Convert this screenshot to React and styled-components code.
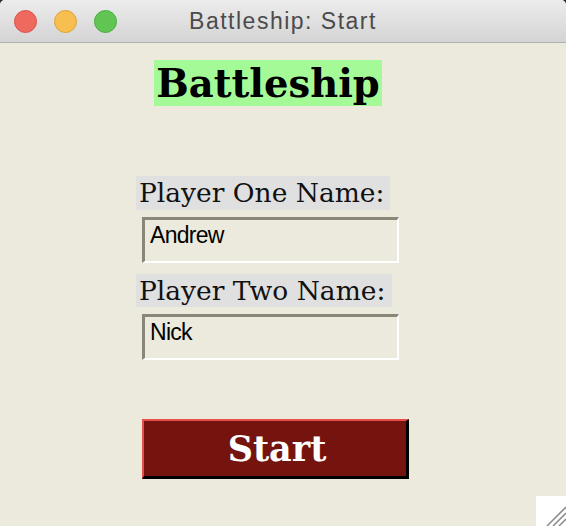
import React from 'react';
import styled, { createGlobalStyle } from 'styled-components';

const GlobalStyle = createGlobalStyle`
  html, body {
    margin: 0;
    padding: 0;
    background: #2a2a2a;
  }
  * {
    box-sizing: border-box;
  }
`;

function App() {
  return (
    <Window>
      <GlobalStyle />
      <TitleBar>
        <Lights>
          <Light color="#ee6a5f" edge="#d9534b" />
          <Light color="#f6bf4f" edge="#dea23a" />
          <Light color="#61c554" edge="#4aad40" />
        </Lights>
        <Title>Battleship: Start</Title>
      </TitleBar>

      <Content>
        <Heading>Battleship</Heading>

        <Label $width={254} $top={70} $height={34}>Player One Name:</Label>
        <Entry defaultValue="Andrew" $top={7} />

        <Label $width={256} $top={11} $height={33}>Player Two Name:</Label>
        <Entry defaultValue="Nick" $top={7} />

        <StartButton>Start</StartButton>
      </Content>

      <Grip>
        <svg width="30" height="30" viewBox="0 0 30 30">
          <line x1="30" y1="11" x2="11" y2="30" stroke="#8f8f8f" strokeWidth="1.6" />
          <line x1="30" y1="17" x2="17" y2="30" stroke="#8f8f8f" strokeWidth="1.6" />
          <line x1="30" y1="23" x2="23" y2="30" stroke="#8f8f8f" strokeWidth="1.6" />
        </svg>
      </Grip>
    </Window>
  );
}

export default App;

const Window = styled.div`
  position: relative;
  width: 566px;
  height: 526px;
  background: #ece9dd;
  border-radius: 5px 5px 0 0;
  overflow: hidden;
`;

const TitleBar = styled.div`
  display: grid;
  grid-template-columns: 1fr auto 1fr;
  align-items: center;
  height: 43px;
  background: linear-gradient(#ececec, #d4d4d4);
  border-bottom: 1px solid #b1b1b1;
`;

const Lights = styled.div`
  display: flex;
  gap: 17px;
  padding-left: 14px;
  padding-top: 1px;
`;

const Light = styled.span`
  width: 23px;
  height: 23px;
  border-radius: 50%;
  background: ${props => props.color};
  border: 1px solid ${props => props.edge};
`;

const Title = styled.div`
  font-family: "Liberation Sans", Arial, sans-serif;
  font-size: 23px;
  letter-spacing: 1.5px;
  color: #4b4b4b;
  padding-top: 1px;
`;

const Content = styled.div`
  display: flex;
  flex-direction: column;
  align-items: flex-start;
  padding-left: 136px;
`;

const Heading = styled.div`
  margin-top: 17px;
  margin-left: 18px;
  width: 228px;
  height: 46px;
  background: #a5fa98;
  display: flex;
  align-items: center;
  justify-content: center;
  font-family: "DejaVu Serif", serif;
  font-weight: bold;
  font-size: 38.5px;
  color: #000;
  white-space: nowrap;
`;

const Label = styled.div`
  margin-top: ${props => props.$top}px;
  width: ${props => props.$width}px;
  height: ${props => props.$height}px;
  line-height: ${props => props.$height}px;
  background: #e0e0e0;
  padding-left: 3px;
  font-family: "DejaVu Serif", serif;
  font-size: 26.5px;
  color: #111;
  white-space: nowrap;
`;

const Entry = styled.input`
  margin-top: ${props => props.$top}px;
  margin-left: 6px;
  width: 257px;
  height: 46px;
  padding: 0 0 11px 5px;
  background: #ece9dd;
  border-style: solid;
  border-width: 3px 2px 2px 3px;
  border-color: #8a877a #ffffff #ffffff #8a877a;
  font-family: "Liberation Sans", Arial, sans-serif;
  font-size: 23px;
  letter-spacing: -0.7px;
  color: #000;
  outline: none;
`;

const StartButton = styled.button`
  margin-top: 59px;
  margin-left: 6px;
  width: 267px;
  height: 60px;
  padding: 0 0 0 4px;
  background: #75140e;
  border-style: solid;
  border-width: 2px 3px 3px 2px;
  border-color: #e5504a #000 #000 #e5504a;
  display: flex;
  align-items: center;
  justify-content: center;
  font-family: "DejaVu Serif", serif;
  font-weight: bold;
  font-size: 35px;
  color: #fff;
`;

const Grip = styled.div`
  position: absolute;
  right: 0;
  bottom: 0;
  width: 30px;
  height: 30px;
  background: #fff;
  display: flex;
`;
